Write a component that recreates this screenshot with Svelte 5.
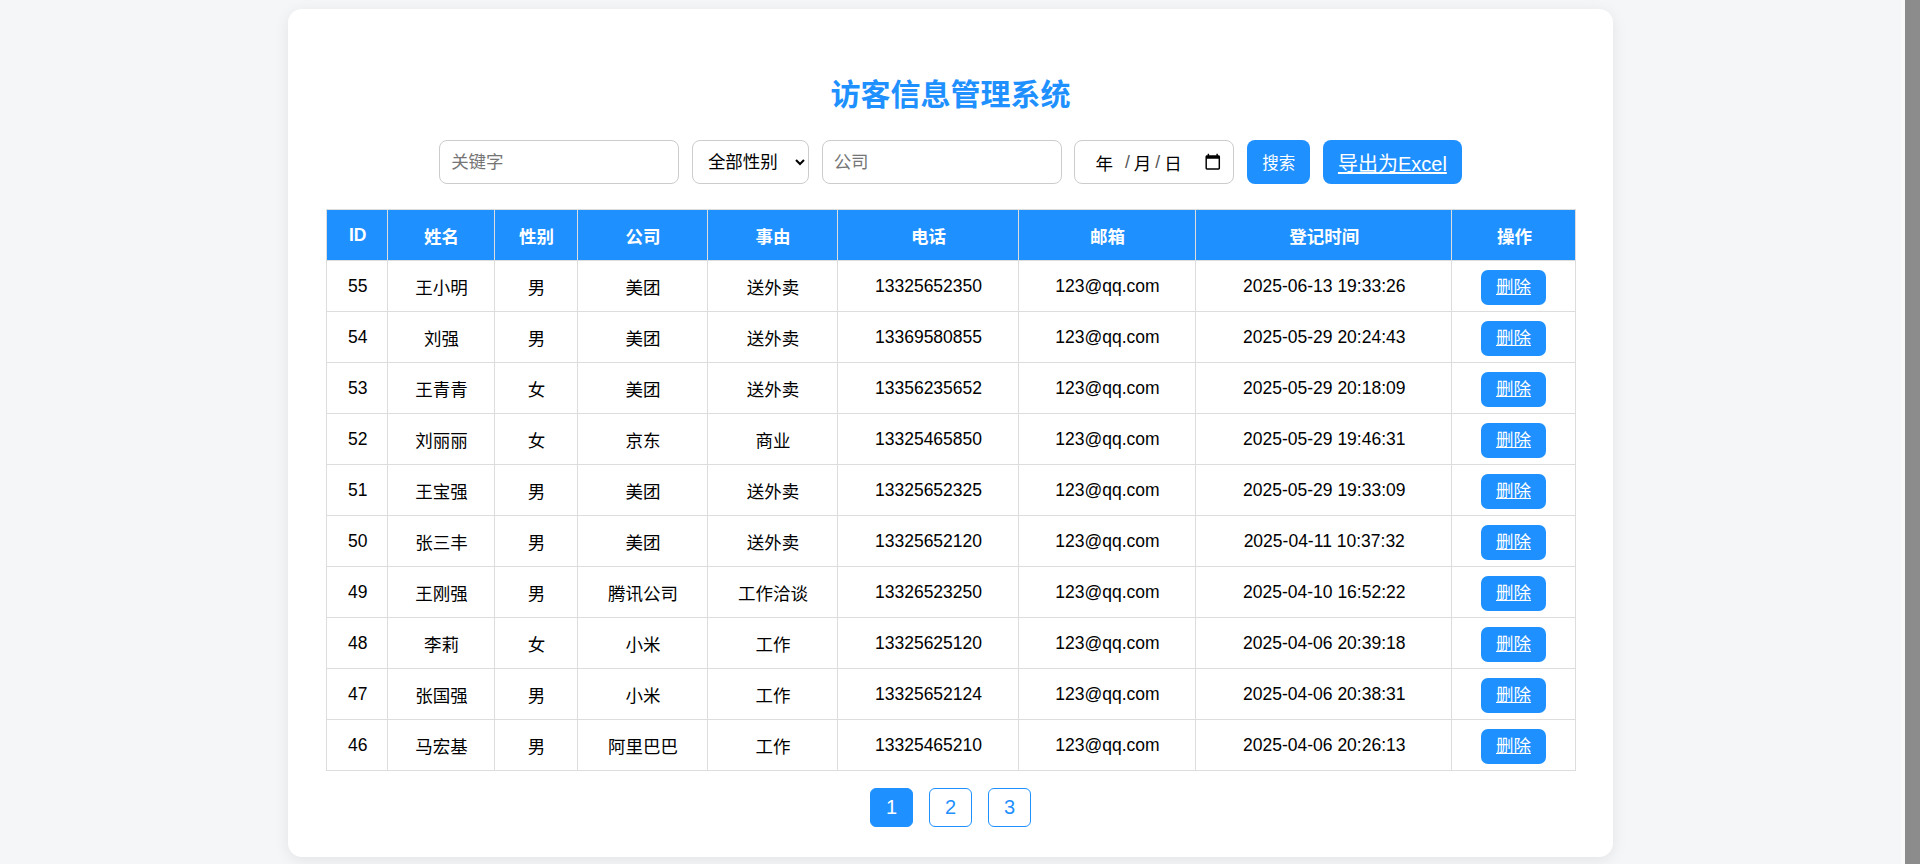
<script>
  const rows = [
    { id: 55, name: "王小明", gender: "男", company: "美团", reason: "送外卖", phone: "13325652350", email: "123@qq.com", time: "2025-06-13 19:33:26" },
    { id: 54, name: "刘强", gender: "男", company: "美团", reason: "送外卖", phone: "13369580855", email: "123@qq.com", time: "2025-05-29 20:24:43" },
    { id: 53, name: "王青青", gender: "女", company: "美团", reason: "送外卖", phone: "13356235652", email: "123@qq.com", time: "2025-05-29 20:18:09" },
    { id: 52, name: "刘丽丽", gender: "女", company: "京东", reason: "商业", phone: "13325465850", email: "123@qq.com", time: "2025-05-29 19:46:31" },
    { id: 51, name: "王宝强", gender: "男", company: "美团", reason: "送外卖", phone: "13325652325", email: "123@qq.com", time: "2025-05-29 19:33:09" },
    { id: 50, name: "张三丰", gender: "男", company: "美团", reason: "送外卖", phone: "13325652120", email: "123@qq.com", time: "2025-04-11 10:37:32" },
    { id: 49, name: "王刚强", gender: "男", company: "腾讯公司", reason: "工作洽谈", phone: "13326523250", email: "123@qq.com", time: "2025-04-10 16:52:22" },
    { id: 48, name: "李莉", gender: "女", company: "小米", reason: "工作", phone: "13325625120", email: "123@qq.com", time: "2025-04-06 20:39:18" },
    { id: 47, name: "张国强", gender: "男", company: "小米", reason: "工作", phone: "13325652124", email: "123@qq.com", time: "2025-04-06 20:38:31" },
    { id: 46, name: "马宏基", gender: "男", company: "阿里巴巴", reason: "工作", phone: "13325465210", email: "123@qq.com", time: "2025-04-06 20:26:13" },
  ];
  const widths = [60.5, 107, 83, 130, 130, 181, 177, 256.5, 124];
  const heads = ["ID", "姓名", "性别", "公司", "事由", "电话", "邮箱", "登记时间", "操作"];
</script>

<div class="page">
  <main class="main">
    <div class="card">
      <h1>访客信息管理系统</h1>

      <form class="toolbar">
        <input class="kw" type="text" placeholder="关键字" />
        <select class="sel">
          <option>全部性别</option>
          <option>男</option>
          <option>女</option>
        </select>
        <input class="co" type="text" placeholder="公司" />
        <div class="date">
          <span class="d-y">年</span>
          <span class="d-s">/</span>
          <span>月</span>
          <span class="d-s">/</span>
          <span>日</span>
          <svg class="cal" viewBox="0 0 24 24" width="17.5" height="17.5"><path d="M20 3h-1V1h-2v2H7V1H5v2H4c-1.1 0-2 .9-2 2v16c0 1.1.9 2 2 2h16c1.1 0 2-.9 2-2V5c0-1.1-.9-2-2-2zm0 18H4V8h16v13z" fill="#000"/></svg>
        </div>
        <button class="btn search" type="button">搜索</button>
        <a class="btn export" href="#top">导出为Excel</a>
      </form>

      <table>
        <colgroup>
          {#each widths as w}
            <col style="width: {w}px" />
          {/each}
        </colgroup>
        <thead>
          <tr>
            {#each heads as h}
              <th>{h}</th>
            {/each}
          </tr>
        </thead>
        <tbody>
          {#each rows as r (r.id)}
            <tr>
              <td>{r.id}</td>
              <td>{r.name}</td>
              <td>{r.gender}</td>
              <td>{r.company}</td>
              <td>{r.reason}</td>
              <td>{r.phone}</td>
              <td>{r.email}</td>
              <td>{r.time}</td>
              <td><a class="del" href="#top">删除</a></td>
            </tr>
          {/each}
        </tbody>
      </table>

      <div class="pager">
        <a class="pg active" href="#top">1</a>
        <a class="pg" href="#top">2</a>
        <a class="pg" href="#top">3</a>
      </div>
    </div>
  </main>
  <div class="scrollbar"></div>
</div>

<style>
  :global(body) {
    margin: 0;
    background: #f4f6f8;
    font-family: "Liberation Sans", "Noto Sans CJK SC", sans-serif;
    overflow: hidden;
  }

  .page {
    display: flex;
    height: 864px;
  }

  .main {
    width: 1901px;
    padding-top: 9px;
    box-sizing: border-box;
  }

  .scrollbar {
    margin-left: 4px;
    width: 15px;
    background: #8c8c8c;
    box-shadow: -4px 0 0 #f9f9f9;
  }

  .card {
    width: 1325px;
    height: 848px;
    margin: 0 auto;
    padding: 67px 38px 0;
    box-sizing: border-box;
    background: #fff;
    border-radius: 14px;
    box-shadow: 0 3px 15px rgba(0, 0, 0, 0.08);
  }

  h1 {
    margin: 0;
    color: #1e90ff;
    font-size: 30px;
    line-height: 38px;
    font-weight: 700;
    text-align: center;
  }

  .toolbar {
    display: flex;
    justify-content: center;
    gap: 12.75px;
    margin-top: 26px;
    height: 44px;
  }

  input,
  select,
  .date {
    box-sizing: border-box;
    height: 44px;
    border: 1.5px solid #ccc;
    border-radius: 8px;
    background: #fff;
    font-family: inherit;
    font-size: 17.5px;
    color: #000;
  }

  input {
    padding: 0 11px;
    outline: none;
  }

  input::placeholder {
    color: #757575;
  }

  .kw {
    width: 240px;
  }

  .sel {
    width: 117px;
    padding: 0 0 0 11px;
  }

  .co {
    width: 240px;
  }

  .date {
    width: 160px;
    display: flex;
    align-items: center;
    gap: 3px;
    padding-left: 20px;
  }

  .d-y {
    margin-right: 8px;
  }

  .d-s {
    color: #555;
    margin: 0 1px;
  }

  .cal {
    margin-left: auto;
    margin-right: 11.5px;
  }

  .btn {
    box-sizing: border-box;
    height: 44px;
    display: flex;
    align-items: center;
    justify-content: center;
    background: #1e90ff;
    color: #fff;
    border: none;
    border-radius: 8px;
    font-family: inherit;
  }

  .search {
    width: 63px;
    font-size: 16.5px;
  }

  .export {
    width: 139px;
    font-size: 20px;
  }

  table {
    width: 1249px;
    margin-top: 25px;
    border-collapse: collapse;
    table-layout: fixed;
    font-size: 17.5px;
  }

  th,
  td {
    border: 1px solid #ddd;
    height: 50px;
    padding: 0 0 0 2px;
    text-align: center;
    vertical-align: middle;
    color: #000;
  }

  th {
    background: #1e90ff;
    color: #fff;
    font-weight: 700;
  }

  .del {
    display: inline-block;
    box-sizing: border-box;
    width: 65px;
    height: 35px;
    line-height: 34px;
    margin: 3px 0 0 -2px;
    background: #1e90ff;
    color: #fff;
    border-radius: 7px;
    font-size: 17.5px;
    vertical-align: middle;
  }

  .pager {
    display: flex;
    justify-content: center;
    gap: 16px;
    margin-top: 17px;
  }

  .pg {
    box-sizing: border-box;
    width: 43px;
    height: 39px;
    line-height: 37px;
    text-align: center;
    border: 1px solid #1e90ff;
    border-radius: 6px;
    color: #1e90ff;
    font-size: 20px;
    text-decoration: none;
  }

  .active {
    background: #1e90ff;
    color: #fff;
  }
</style>
